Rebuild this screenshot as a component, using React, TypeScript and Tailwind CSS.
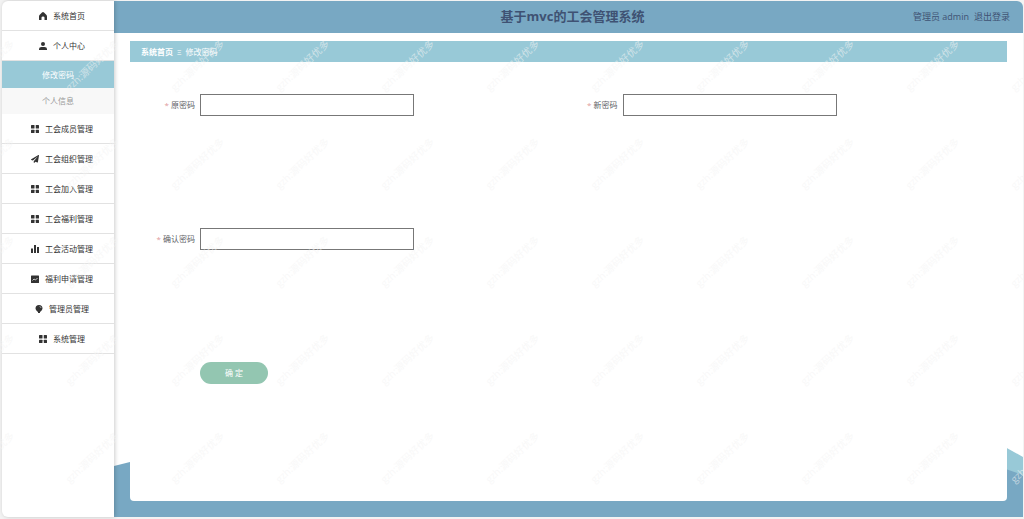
import React from 'react';
import { FaPaperPlane } from 'react-icons/fa';

type IconName = 'home' | 'user' | 'grid' | 'plane' | 'bars' | 'chart' | 'balloon';

const MenuIcon = ({ name }: { name: IconName }) => {
  if (name === 'plane') return <FaPaperPlane className="size-2" />;
  return (
    <svg viewBox="0 0 16 16" className="size-2" fill="currentColor" aria-hidden="true">
      {name === 'home' && (
        <path d="M8 0Q7 0 6 1L1 6Q0 7 0 9v6q0 1 1 1h4v-5q0-2 3-2t3 2v5h4q1 0 1-1V9q0-2-1-3l-5-5Q9 0 8 0z" />
      )}
      {name === 'user' && (
        <>
          <circle cx="8" cy="4" r="4" />
          <path d="M0 16v-2q0-4 5-4h6q5 0 5 4v2z" />
        </>
      )}
      {name === 'grid' && (
        <>
          <rect width="7" height="7" rx="1" />
          <rect x="9.5" width="6.5" height="7" rx="1" />
          <rect y="9.5" width="7" height="6.5" rx="1" />
          <rect x="9.5" y="9.5" width="6.5" height="6.5" rx="1" />
        </>
      )}
      {name === 'bars' && <path d="M0 7h4v9H0zM6 0h4v16H6zM12 4h4v12h-4z" />}
      {name === 'chart' && (
        <>
          <rect y="1" width="16" height="15" rx="1" />
          <path d="m3 11 3-3 3 2 4-4" fill="none" stroke="white" strokeWidth="1.5" />
        </>
      )}
      {name === 'balloon' && (
        <>
          <path d="M8 0a7 7 0 0 1 7 7c0 3-4 6-5 7H6C5 13 1 10 1 7a7 7 0 0 1 7-7zM6 14h4v2H6z" />
          <path d="M9 3q3 0 3 3" fill="none" stroke="white" />
        </>
      )}
    </svg>
  );
};

const topItems: { label: string; icon: IconName }[] = [
  { label: '系统首页', icon: 'home' },
  { label: '个人中心', icon: 'user' },
];

const manageItems: { label: string; icon: IconName }[] = [
  { label: '工会成员管理', icon: 'grid' },
  { label: '工会组织管理', icon: 'plane' },
  { label: '工会加入管理', icon: 'grid' },
  { label: '工会福利管理', icon: 'grid' },
  { label: '工会活动管理', icon: 'bars' },
  { label: '福利申请管理', icon: 'chart' },
  { label: '管理员管理', icon: 'balloon' },
  { label: '系统管理', icon: 'grid' },
];

const MenuItem = ({ label, icon }: { label: string; icon: IconName }) => (
  <a
    href="#"
    className="flex h-[30px] items-center justify-center gap-1.5 border-b border-[#e2e2e2] pl-2 text-[#333]"
  >
    <MenuIcon name={icon} />
    {label}
  </a>
);

const Field = ({ id, label }: { id: string; label: string }) => (
  <div className="flex h-[134px] items-start">
    <label htmlFor={id} className="w-[70px] pr-[5px] text-right leading-[22px] text-[#606266]">
      <span className="text-[#e09a9a]">*</span> {label}
    </label>
    <input
      id={id}
      type="password"
      className="h-[22px] w-[214px] border border-[#777] bg-white px-2 outline-none"
    />
  </div>
);

const Watermark = () => (
  <div
    aria-hidden="true"
    className="pointer-events-none absolute inset-0 z-20 grid auto-rows-[98px] grid-cols-[repeat(11,105px)] content-start justify-center overflow-hidden pt-4"
  >
    {Array.from({ length: 55 }, (_, i) => (
      <span key={i} className="flex items-center justify-center">
        <span className="-rotate-43 text-[10px] whitespace-nowrap text-[#f4f4f4]/60">gzh:源码好优多</span>
      </span>
    ))}
  </div>
);

const App = () => {
  return (
    <div className="relative flex min-h-screen bg-[#f3f3f3] px-px pt-px pb-[2px] font-['Open_Sans','Noto_Sans_CJK_SC',sans-serif] text-[8px]">
      {/* Sidebar */}
      <nav className="z-10 ml-px w-28 shrink-0 rounded-l-md bg-white shadow-[1px_0_4px_rgba(0,0,0,0.2)]">
        {topItems.map((item) => (
          <MenuItem key={item.label} {...item} />
        ))}
        <a href="#" className="flex h-[27px] items-center justify-center bg-[#98c9d7] text-white">
          修改密码
        </a>
        <a href="#" className="flex h-[26px] items-center justify-center bg-[#f8f8f8] text-[#999]">
          个人信息
        </a>
        {manageItems.map((item) => (
          <MenuItem key={item.label} {...item} />
        ))}
      </nav>

      {/* Main area */}
      <div className="flex min-w-0 flex-1 flex-col overflow-hidden rounded-tr-md bg-white">
        <header className="grid h-8 grid-cols-[1fr_auto_1fr] items-center bg-[#78a8c3] pl-2 text-[#3f5273]">
          <h1 className="col-start-2 text-[13px] font-bold">基于mvc的工会管理系统</h1>
          <div className="flex justify-end gap-[5px] pr-[13px] text-[9px]">
            <span>管理员 admin</span>
            <a href="#">退出登录</a>
          </div>
        </header>
        <div className="relative flex flex-1 flex-col px-4 pt-2 pb-4">
          {/* Background waves */}
          <svg
            viewBox="0 0 909 70"
            preserveAspectRatio="none"
            className="absolute inset-x-0 bottom-0 h-[70px] w-full"
            aria-hidden="true"
          >
            <path d="M880 0h11l18 10v40h-29z" fill="#98c9d7" />
            <path d="M0 19 16 15 880 18 909 28V70H0z" fill="#78a8c3" />
          </svg>
          <main className="relative flex-1 rounded-b bg-white">
            <div className="flex h-[21px] items-center gap-1 bg-[#98c9d7] px-[11px] text-white">
              <a href="#" className="font-bold">系统首页</a>
              <span>Ξ</span>
              <span>修改密码</span>
            </div>
            <form className="pt-8" onSubmit={(e) => e.preventDefault()}>
              <div className="grid grid-cols-2 pr-8">
                <Field id="old-password" label="原密码" />
                <Field id="new-password" label="新密码" />
                <Field id="confirm-password" label="确认密码" />
              </div>
              <button type="submit" className="ml-[70px] h-[22px] w-[68px] rounded-full bg-[#93c6b1] text-white">
                确 定
              </button>
            </form>
          </main>
        </div>
      </div>
      <Watermark />
    </div>
  );
};

export default App;
